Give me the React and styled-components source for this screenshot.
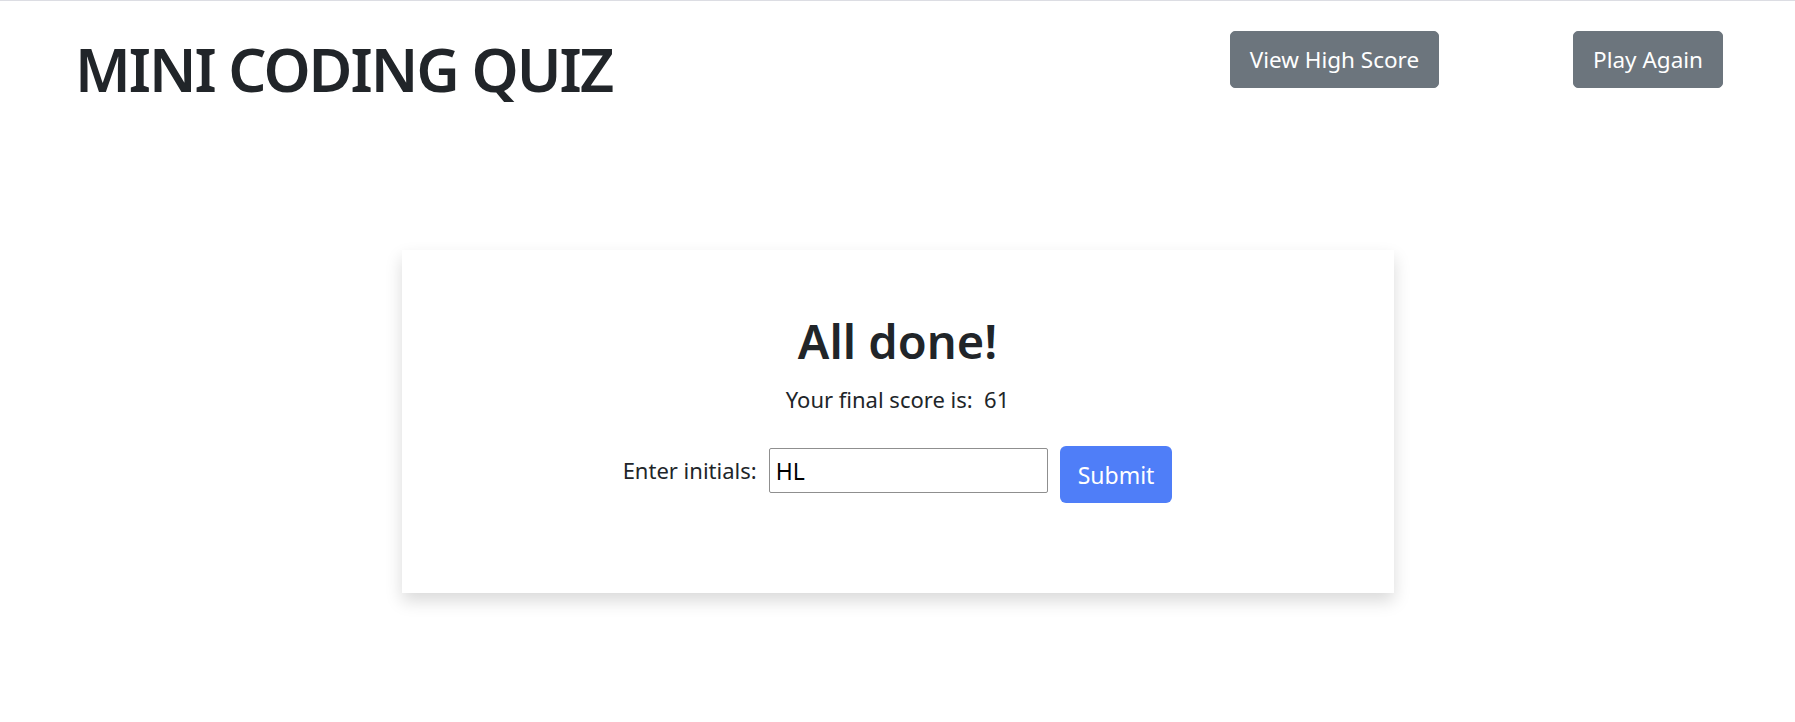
import React, { useState } from 'react'
import styled, { createGlobalStyle } from 'styled-components'

const GlobalStyle = createGlobalStyle`
  * {
    box-sizing: border-box;
  }

  body {
    margin: 0;
    background: #ffffff;
    color: #212529;
    font-family: 'Noto Sans', 'Open Sans', sans-serif;
    border-top: 1px solid #dcdde3;
  }
`

const App = () => {
  const [initials, setInitials] = useState('HL')

  return (
    <Page>
      <GlobalStyle />
      <Header>
        <Title>MINI CODING QUIZ</Title>
        <Nav>
          <NavButton>View High Score</NavButton>
          <NavButton>Play Again</NavButton>
        </Nav>
      </Header>

      <Main>
        <Card>
          <Heading>All done!</Heading>
          <Score>Your final score is:&nbsp; 61</Score>
          <Form onSubmit={(e) => e.preventDefault()}>
            <Label htmlFor="initials">Enter initials:</Label>
            <Input
              id="initials"
              value={initials}
              onChange={(e) => setInitials(e.target.value)}
            />
            <SubmitButton type="submit">Submit</SubmitButton>
          </Form>
        </Card>
      </Main>
    </Page>
  )
}

export default App

const Page = styled.div`
  min-height: 721px;
`

const Header = styled.header`
  display: flex;
  justify-content: space-between;
  align-items: flex-start;
  padding: 30px 72px 0 75px;
`

const Title = styled.h1`
  margin: 2px 0 0;
  font-size: 60px;
  line-height: 1.2;
  font-weight: 600;
  letter-spacing: -2px;
  color: #212529;
`

const Nav = styled.nav`
  display: flex;
  gap: 134px;
`

const NavButton = styled.button`
  height: 57px;
  padding: 0 19px;
  font-family: inherit;
  font-size: 22.5px;
  color: #ffffff;
  background: #6c757d;
  border: 1px solid #6c757d;
  border-radius: 5px;
  cursor: pointer;
`

const Main = styled.main`
  display: flex;
  justify-content: center;
  padding-top: 145px;
`

const Card = styled.section`
  width: 992px;
  height: 343px;
  padding-top: 63px;
  display: flex;
  flex-direction: column;
  align-items: center;
  background: #ffffff;
  box-shadow: 0 8px 16px rgba(0, 0, 0, 0.15);
`

const Heading = styled.h2`
  margin: 0;
  font-size: 47px;
  line-height: 1.2;
  font-weight: 600;
`

const Score = styled.p`
  margin: 14px 0 0;
  font-size: 22px;
  line-height: 1.5;
`

const Form = styled.form`
  display: flex;
  align-items: flex-start;
  gap: 12px;
  margin-top: 30px;
`

const Label = styled.label`
  margin-top: 2px;
  font-size: 22px;
  line-height: 45px;
`

const Input = styled.input`
  width: 279px;
  height: 45px;
  margin-top: 2px;
  padding: 0 6px;
  font-family: inherit;
  font-size: 23px;
  color: #000000;
  border: 1px solid #8f8f8f;
  border-radius: 2px;
  outline: none;
`

const SubmitButton = styled.button`
  height: 57px;
  padding: 0 18px;
  font-family: inherit;
  font-size: 23px;
  color: #ffffff;
  background: #4f7ef8;
  border: none;
  border-radius: 6px;
  cursor: pointer;
`
